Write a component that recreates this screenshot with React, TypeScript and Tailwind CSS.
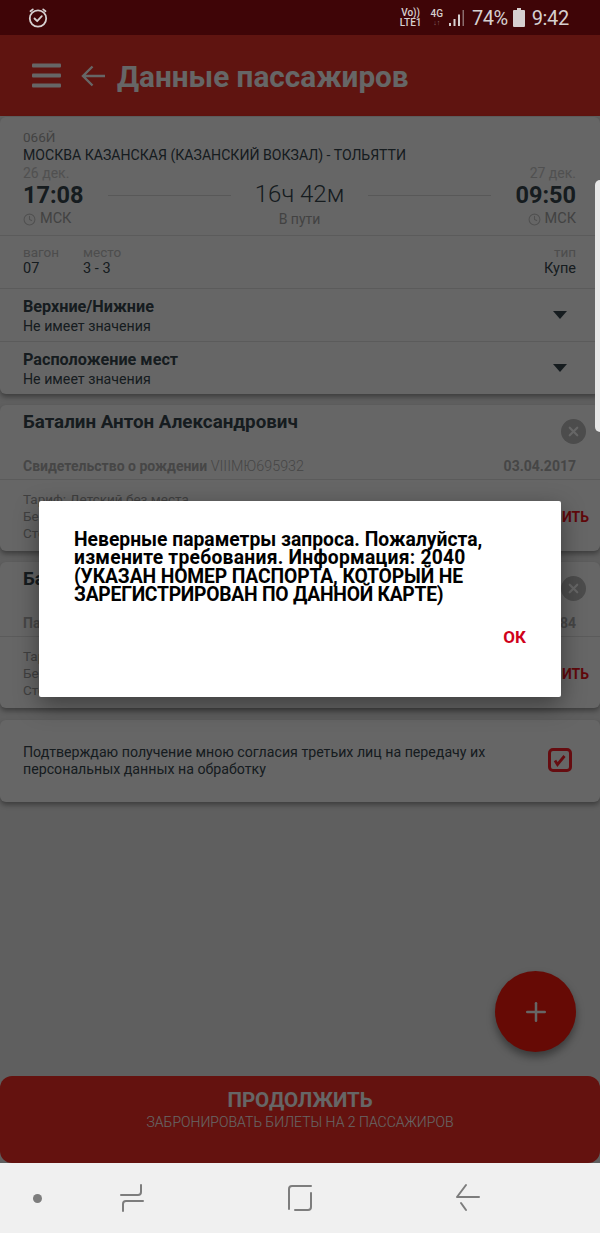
import { Clock, Plus, X } from "lucide-react";

function Choice({ title }: { title: string }) {
  return (
    <div className="flex h-[53px] items-center justify-between border-t border-[#e4e4e4] pl-[23px] pr-[33px]">
      <div className="pt-[1px]">
        <div className="text-[16.2px] font-bold leading-[20px] text-[#37474f]">{title}</div>
        <div className="text-[14.2px] leading-[18px] text-[#37474f]">Не имеет значения</div>
      </div>
      <div className="h-0 w-0 border-x-[7px] border-t-[8px] border-x-transparent border-t-[#37474f]" />
    </div>
  );
}

function Passenger({ name, doc, num, date }: { name: string; doc: string; num: string; date: string }) {
  return (
    <section className="relative h-[146px] rounded-[6px] bg-white shadow-[0_3px_5px_rgba(0,0,0,0.35)]">
      <div className="h-[47px] pl-[23px] pr-6 pt-[6px] text-[18.8px] font-bold leading-[22px] text-[#37474f]">{name}</div>
      <div className="absolute right-[14px] top-[14px] flex h-[25px] w-[25px] items-center justify-center rounded-full bg-[#bdbdbd]">
        <X className="h-[15px] w-[15px] text-white" strokeWidth={3.5} />
      </div>
      <div className="flex h-[28px] items-start justify-between border-b border-[#e4e4e4] pl-[23px] pr-6 pt-[5px] text-[14px] leading-[18px] text-[#b0b0b0]">
        <div>
          <span className="font-bold">{doc}</span> <span className="text-[14.3px] font-light">{num}</span>
        </div>
        <div className="font-bold">{date}</div>
      </div>
      <div className="relative pl-[23px] pr-6 pt-[11px] text-[13.5px] leading-[17px] text-[#a0a0a0]">
        <div>Тариф: Детский без места</div>
        <div>Без питания</div>
        <div>Стоимость</div>
        <div className="absolute right-[11px] top-[29px] text-[14px] font-bold text-[#f0141c]">ИЗМЕНИТЬ</div>
      </div>
    </section>
  );
}

function Times({ side, day, time }: { side: "start" | "end"; day: string; time: string }) {
  return (
    <div className={side === "start" ? "text-left" : "text-right"}>
      <div className="text-[14px] leading-[16px] text-[#c9c9c9]">{day}</div>
      <div className="text-[23.5px] font-bold leading-[28px] text-[#37474f]">{time}</div>
      <div className={`flex items-center gap-[4px] text-[14.5px] leading-[20px] text-[#a6a6a6] ${side === "end" ? "justify-end" : ""}`}>
        <Clock className="h-[13px] w-[13px] text-[#c9c9c9]" />
        МСК
      </div>
    </div>
  );
}

export default function App() {
  return (
    <div className="flex h-[1233px] w-[600px] flex-col overflow-hidden bg-[#f0f0f0] font-['Roboto',sans-serif]">
      {/* status bar */}
      <div className="flex h-[35px] shrink-0 items-center justify-between bg-[#3f0507] pl-[27px] pr-[31px] text-[#d6d0d0]">
        <svg width="22" height="22" viewBox="0 0 22 22" fill="none" stroke="currentColor" strokeWidth="1.8" strokeLinecap="round" strokeLinejoin="round">
          <circle cx="11" cy="11.5" r="8.2" />
          <path d="M7.5 11.5l2.7 2.7 4.6-5" />
          <path d="M3.5 4.2L5.8 2.4M18.5 4.2l-2.3-1.8" />
        </svg>
        <div className="flex items-center">
          <div className="mr-[9px] text-center text-[10px] font-medium leading-[10px]">
            <div>Vo))</div>
            <div>LTE1</div>
          </div>
          <div className="mr-[5px] text-center text-[10px] font-medium leading-[10px]">
            <div>4G</div>
            <div className="text-[7px] leading-[8px] text-[#8a6d6d]">↓↑</div>
          </div>
          <svg width="18" height="20" viewBox="0 0 18 20" className="mr-[6px]" fill="currentColor">
            <rect x="1" y="15" width="2" height="3" />
            <rect x="5.5" y="11" width="2" height="7" />
            <rect x="10" y="6.5" width="2" height="11.5" />
            <rect x="14.5" y="2" width="1.5" height="16" fill="#8a6d6d" />
          </svg>
          <span className="mr-[5px] text-[20px] leading-none tracking-[-0.5px]">74%</span>
          <svg width="12" height="19" viewBox="0 0 12 19" className="mr-[7px]" fill="currentColor">
            <path d="M4 0h4v2h3a1 1 0 011 1v15a1 1 0 01-1 1H1a1 1 0 01-1-1V3a1 1 0 011-1h3z" />
          </svg>
          <span className="text-[20px] leading-none tracking-[-0.3px]">9:42</span>
        </div>
      </div>

      <div className="relative flex min-h-0 flex-1 flex-col bg-[#ededed]">
        {/* header */}
        <header className="flex h-[81px] shrink-0 items-center bg-[#ee3228] pl-[32px] text-white">
          <svg width="30" height="26" viewBox="0 0 30 26" fill="currentColor" className="mr-[19px]">
            <rect x="0" y="0.5" width="29" height="4" rx="1" />
            <rect x="0" y="10.5" width="29" height="4" rx="1" />
            <rect x="0" y="20.5" width="29" height="4" rx="1" />
          </svg>
          <svg width="24" height="22" viewBox="0 0 24 22" fill="none" stroke="currentColor" strokeWidth="2.4" className="mr-[12px]">
            <path d="M24 11H2M11.5 1.5L2 11l9.5 9.5" />
          </svg>
          <h1 className="pt-[3px] text-[29.7px] font-bold leading-none">Данные пассажиров</h1>
        </header>

        <main className="flex flex-col gap-[11px] pt-[1px]">
          <section className="h-[277px] rounded-[6px] bg-white shadow-[0_3px_5px_rgba(0,0,0,0.35)]">
            <div className="h-[118px] pl-[23px] pr-6 pt-[12px]">
              <div className="text-[13.5px] leading-[16px] text-[#a6a6a6]">066Й</div>
              <div className="text-[14.1px] leading-[20px] text-[#37474f]">МОСКВА КАЗАНСКАЯ (КАЗАНСКИЙ ВОКЗАЛ) - ТОЛЬЯТТИ</div>
              <div className="flex items-start">
                <Times side="start" day="26 дек." time="17:08" />
                <div className="mx-6 mt-[30px] h-px flex-1 bg-[#dcdcdc]" />
                <div className="mt-[15px] text-center">
                  <div className="text-[24px] font-light leading-[29px] text-[#37474f]">16ч 42м</div>
                  <div className="text-[14px] leading-[20px] text-[#a6a6a6]">В пути</div>
                </div>
                <div className="mx-6 mt-[30px] h-px flex-1 bg-[#dcdcdc]" />
                <Times side="end" day="27 дек." time="09:50" />
              </div>
            </div>
            <div className="flex h-[53px] items-start justify-between border-t border-[#e4e4e4] pl-[23px] pr-6 pt-[8px]">
              <div className="flex gap-[24px]">
                <div>
                  <div className="text-[13.5px] leading-[16px] text-[#c0c0c0]">вагон</div>
                  <div className="text-[14.5px] leading-[18px] text-[#37474f]">07</div>
                </div>
                <div>
                  <div className="text-[13.5px] leading-[16px] text-[#c0c0c0]">место</div>
                  <div className="text-[14.5px] leading-[18px] text-[#37474f]">3 - 3</div>
                </div>
              </div>
              <div className="text-right">
                <div className="text-[13.5px] leading-[16px] text-[#c0c0c0]">тип</div>
                <div className="text-[14.5px] leading-[18px] text-[#37474f]">Купе</div>
              </div>
            </div>
            <Choice title="Верхние/Нижние" />
            <Choice title="Расположение мест" />
          </section>

          <Passenger name="Баталин Антон Александрович" doc="Свидетельство о рождении" num="VIIIМЮ695932" date="03.04.2017" />
          <Passenger name="Баталин Антон" doc="Паспорт" num="" date="01.01.1984" />

          <section className="mt-px flex h-[82px] items-center justify-between rounded-[6px] bg-white pl-[23px] pr-[28px] shadow-[0_3px_5px_rgba(0,0,0,0.35)]">
            <p className="text-[14.2px] leading-[17px] text-[#37474f]">
              Подтверждаю получение мною согласия третьих лиц на передачу их
              <br />
              персональных данных на обработку
            </p>
            <div className="mb-[2px] flex h-[24px] w-[24px] items-center justify-center rounded-[5px] border-[3px] border-[#ff2028]">
              <svg width="14" height="14" viewBox="0 0 14 14" fill="none" stroke="#ff2028" strokeWidth="2.8">
                <path d="M2 7.5l2.5 4 7-8.5" />
              </svg>
            </div>
          </section>
        </main>

        {/* continue button */}
        <button className="mt-auto flex h-[87px] w-full shrink-0 flex-col items-center rounded-[12px] bg-[#fb2f26] pt-[11px] text-white">
          <span className="text-[20.5px] font-bold leading-[26px]">ПРОДОЛЖИТЬ</span>
          <span className="text-[14px] font-light leading-[18px]">ЗАБРОНИРОВАТЬ БИЛЕТЫ НА 2 ПАССАЖИРОВ</span>
        </button>

        <div className="absolute right-[24px] top-[936px] flex h-[81px] w-[81px] items-center justify-center rounded-full bg-[#ff1a0d] shadow-[0_5px_8px_rgba(0,0,0,0.4)]">
          <Plus className="h-[30px] w-[30px] text-white" strokeWidth={2} />
        </div>

        {/* dim layer and dialog */}
        <div className="absolute inset-0 bg-black/60" />
        <div className="absolute right-0 top-[145px] h-[252px] w-[5px] rounded-l-[5px] bg-[#e8e8e8]" />
        <div className="absolute left-[39px] top-[466px] h-[196px] w-[522px] rounded-[2px] bg-white px-[35px] pt-[30px] shadow-[0_8px_24px_rgba(0,0,0,0.4)]">
          <div className="text-[19.3px] font-bold leading-[18.4px] text-black">
            <p>Неверные параметры запроса. Пожалуйста,</p>
            <p className="tracking-[0.25px]">измените требования. Информация: 2040</p>
            <p className="tracking-[-0.12px]">(УКАЗАН НОМЕР ПАСПОРТА, КОТОРЫЙ НЕ</p>
            <p className="tracking-[-0.25px]">ЗАРЕГИСТРИРОВАН ПО ДАННОЙ КАРТЕ)</p>
          </div>
          <div className="mt-[20px] text-right text-[17px] font-bold leading-[24px] text-[#d0021b]">ОК</div>
        </div>
      </div>

      {/* android nav */}
      <nav className="relative flex h-[70px] shrink-0 items-center bg-[#f0f0f0] text-[#7d7d7d]">
        <div className="ml-[33px] h-[9px] w-[9px] rounded-full bg-current" />
        <svg width="26" height="32" viewBox="0 0 26 32" fill="none" stroke="currentColor" strokeWidth="2" strokeLinecap="round" strokeLinejoin="round" className="ml-[77px]">
          <path d="M2 13h17a3 3 0 003-3V3" />
          <path d="M24 19H7a3 3 0 00-3 3v7" />
        </svg>
        <svg width="26" height="28" viewBox="0 0 26 28" fill="none" stroke="currentColor" strokeWidth="2" strokeLinecap="round" strokeLinejoin="round" className="ml-[142px]">
          <path d="M24 2H5a3 3 0 00-3 3v20" />
          <path d="M24 9v14a3 3 0 01-3 3H8" />
        </svg>
        <svg width="26" height="30" viewBox="0 0 26 30" fill="none" stroke="currentColor" strokeWidth="2" strokeLinecap="round" strokeLinejoin="round" className="ml-[142px]">
          <path d="M24 14H2L11 2" />
          <path d="M6 20l5 7" />
        </svg>
      </nav>
    </div>
  );
}
